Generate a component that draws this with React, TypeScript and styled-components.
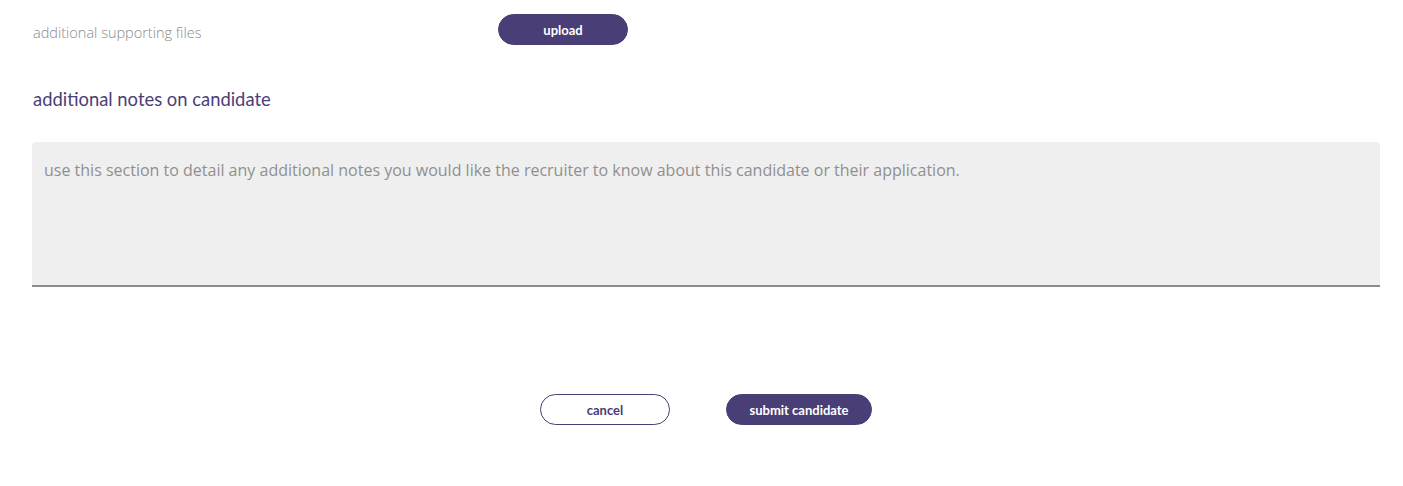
import styled, { createGlobalStyle } from 'styled-components';

const GlobalStyle = createGlobalStyle`
  body {
    margin: 0;
    background: #ffffff;
    font-family: "Open Sans", sans-serif;
  }
`;

const purple = '#4a3e76';

const Page = styled.main`
  width: 1348px;
  padding: 14px 0 0 32px;
  display: flex;
  flex-direction: column;
`;

const FileRow = styled.div`
  display: flex;
  align-items: center;
  height: 31px;
`;

const FileLabel = styled.span`
  box-sizing: border-box;
  width: 466px;
  padding: 6px 0 0 1px;
  font-size: 14.5px;
  font-weight: 300;
  color: #8a8a8a;
`;

const PillButton = styled.button<{ $outline?: boolean; $width: number }>`
  width: ${(p) => p.$width}px;
  height: 31px;
  border-radius: 16px;
  border: 1px solid ${purple};
  background: ${(p) => (p.$outline ? '#ffffff' : purple)};
  color: ${(p) => (p.$outline ? purple : '#ffffff')};
  font-family: Lato, sans-serif;
  font-weight: 700;
  font-size: 13px;
  cursor: pointer;
  padding: 0;
`;

const SectionHeading = styled.h2`
  margin: 40px 0 0 1px;
  font-family: Lato, sans-serif;
  font-size: 18.4px;
  font-weight: 400;
  color: ${purple};
  line-height: 28px;
`;

const NotesArea = styled.textarea`
  margin-top: 29px;
  box-sizing: border-box;
  width: 1348px;
  height: 145px;
  background: #efefef;
  border: none;
  border-bottom: 2px solid #8c8c8c;
  border-radius: 4px 4px 0 0;
  padding: 17px 12px;
  font-family: "Open Sans", sans-serif;
  font-size: 16px;
  color: #555;
  resize: none;
  outline: none;

  &::placeholder {
    color: #8f8f8f;
  }
`;

const Actions = styled.div`
  margin-top: 107px;
  display: flex;
  justify-content: center;
  gap: 56px;
`;

export default function App() {
  return (
    <>
      <GlobalStyle />
      <Page>
        <FileRow>
          <FileLabel>additional supporting files</FileLabel>
          <PillButton $width={130}>upload</PillButton>
        </FileRow>
        <SectionHeading>additional notes on candidate</SectionHeading>
        <NotesArea placeholder="use this section to detail any additional notes you would like the recruiter to know about this candidate or their application." />
        <Actions>
          <PillButton $outline $width={130}>cancel</PillButton>
          <PillButton $width={146}>submit candidate</PillButton>
        </Actions>
      </Page>
    </>
  );
}
